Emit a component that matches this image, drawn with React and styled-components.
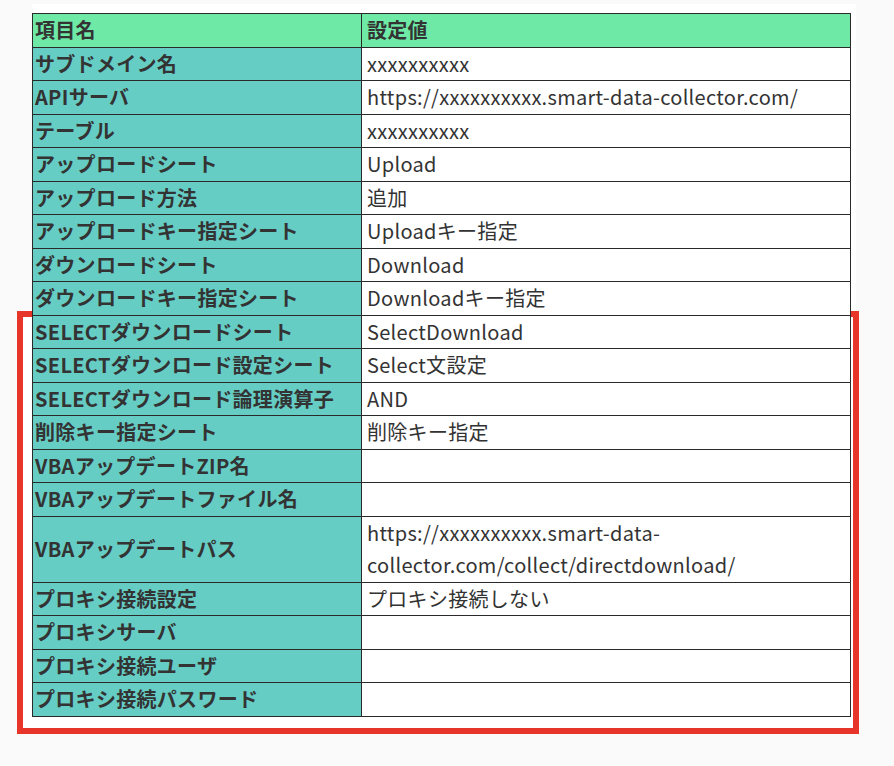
import React from "react";
import styled, { createGlobalStyle } from "styled-components";

const Global = createGlobalStyle`
  html, body { margin: 0; padding: 0; background: #fafafa; }
  body { font-family: "Noto Sans CJK JP", "Noto Sans", sans-serif; }
`;

const Page = styled.div`
  position: relative;
  width: 894px;
  height: 766px;
  overflow: hidden;
`;

const Panel = styled.div`
  margin: 4px 0 0 32px;
  width: 824px;
  padding: 9px 0 12px 0;
  background: #ffffff;
`;

const Highlight = styled.div`
  position: absolute;
  left: 17px;
  top: 311px;
  width: 842px;
  height: 423px;
  box-sizing: border-box;
  border: 6px solid #e8352a;
  background: #ffffff;
  z-index: 0;
`;

const Table = styled.table`
  position: relative;
  z-index: 1;
  width: 819px;
  border-collapse: collapse;
  table-layout: fixed;
  border: 1px solid #3a3a3a;
`;

const Cell = styled.td`
  border: 1px solid #2a2a2a;
  padding: 0 4px;
  line-height: 32.5px;
  font-size: 20px;
  letter-spacing: 0.3px;
  color: #333;
  vertical-align: middle;
  text-align: left;
  background: ${(p) => (p.$head ? "#6ee9a6" : p.$key ? "#66cdc5" : "#ffffff")};
  font-weight: ${(p) => (p.$head || p.$key ? 700 : 400)};
  padding-left: ${(p) => (p.$key ? "2px" : "5px")};
  white-space: ${(p) => (p.$key ? "nowrap" : "normal")};
  overflow: hidden;
`;

const rows = [
  ["サブドメイン名", "xxxxxxxxxx"],
  ["APIサーバ", "https://xxxxxxxxxx.smart-data-collector.com/"],
  ["テーブル", "xxxxxxxxxx"],
  ["アップロードシート", "Upload"],
  ["アップロード方法", "追加"],
  ["アップロードキー指定シート", "Uploadキー指定"],
  ["ダウンロードシート", "Download"],
  ["ダウンロードキー指定シート", "Downloadキー指定"],
  ["SELECTダウンロードシート", "SelectDownload"],
  ["SELECTダウンロード設定シート", "Select文設定"],
  ["SELECTダウンロード論理演算子", "AND"],
  ["削除キー指定シート", "削除キー指定"],
  ["VBAアップデートZIP名", ""],
  ["VBAアップデートファイル名", ""],
  ["VBAアップデートパス", "https://xxxxxxxxxx.smart-data-collector.com/collect/directdownload/"],
  ["プロキシ接続設定", "プロキシ接続しない"],
  ["プロキシサーバ", ""],
  ["プロキシ接続ユーザ", ""],
  ["プロキシ接続パスワード", ""],
];

export default function App() {
  return (
    <Page>
      <Global />
      <Highlight />
      <Panel>
        <Table>
          <colgroup>
            <col style={{ width: "329px" }} />
            <col />
          </colgroup>
          <thead>
            <tr>
              <Cell as="th" $head $key>項目名</Cell>
              <Cell as="th" $head>設定値</Cell>
            </tr>
          </thead>
          <tbody>
            {rows.map(([k, v]) => (
              <tr key={k}>
                <Cell $key>{k}</Cell>
                <Cell>{v || "\u00a0"}</Cell>
              </tr>
            ))}
          </tbody>
        </Table>
      </Panel>
    </Page>
  );
}
